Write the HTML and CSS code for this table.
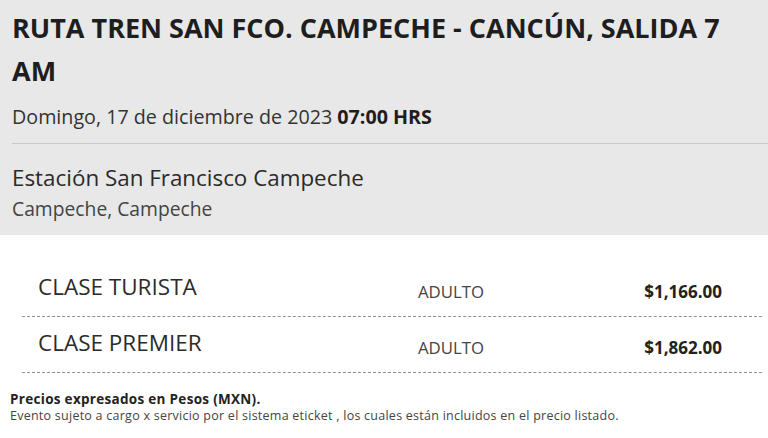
FILE: index.html
```html
<!DOCTYPE html>
<html lang="es">
<head>
<meta charset="utf-8">
<link rel="stylesheet" href="styles.css">
</head>
<body>
<header class="event">
  <h1 class="title">RUTA TREN SAN FCO. CAMPECHE - CANCÚN, SALIDA 7 AM</h1>
  <p class="date">Domingo, 17 de diciembre de 2023 <b>07:00 HRS</b></p>
  <div class="venue">
    <div class="venue-name">Estación San Francisco Campeche</div>
    <div class="venue-city">Campeche, Campeche</div>
  </div>
</header>
<section class="prices">
  <div class="row">
    <div class="cls">CLASE TURISTA</div>
    <div class="type">ADULTO</div>
    <div class="price">$1,166.00</div>
  </div>
  <div class="row">
    <div class="cls">CLASE PREMIER</div>
    <div class="type">ADULTO</div>
    <div class="price">$1,862.00</div>
  </div>
</section>
<footer class="notes">
  <p class="note-strong">Precios expresados en Pesos (MXN).</p>
  <p class="note">Evento sujeto a cargo x servicio por el sistema eticket , los cuales están incluidos en el precio listado.</p>
</footer>
</body>
</html>
```

FILE: styles.css
```css
html, body {
  margin: 0;
  padding: 0;
  background: #ffffff;
  font-family: "Open Sans", "Noto Sans", sans-serif;
  color: #333333;
}
.event {
  background: #e8e8e8;
  padding: 6px 0 10px 12px;
}
.title {
  margin: 0;
  font-size: 27px;
  font-weight: 700;
  line-height: 43px;
  color: #1e1e1e;
  padding-right: 20px;
}
.date {
  margin: 11px 0 0;
  padding: 0 0 13px;
  font-size: 19.7px;
  line-height: 27px;
  color: #333;
  border-bottom: 1px solid #c9c9c9;
}
.date b {
  color: #1e1e1e;
}
.venue {
  padding-top: 19px;
}
.venue-name {
  font-size: 22.4px;
  line-height: 30px;
  color: #2a2a2a;
}
.venue-city {
  font-size: 19.3px;
  line-height: 32px;
  color: #444;
}
.prices {
  margin: 26px 6px 0 22px;
}
.row {
  display: grid;
  grid-template-columns: 380px 1fr auto;
  align-items: center;
  height: 55px;
  padding: 0 40px 0 16px;
  border-bottom: 1px dashed #8a8f99;
}
.cls {
  font-size: 22.5px;
  line-height: 30px;
  color: #2b2b2b;
  padding-bottom: 3px;
}
.type {
  font-size: 16.8px;
  line-height: 24px;
  color: #444;
  padding-top: 6.5px;
}
.price {
  font-size: 17px;
  line-height: 24px;
  font-weight: 700;
  color: #222;
  padding-top: 6.5px;
}
.notes {
  padding: 18px 10px 0;
}
.notes p {
  margin: 0;
}
.note-strong {
  font-size: 13.5px;
  font-weight: 700;
  line-height: 17px;
  letter-spacing: 0.3px;
  color: #222;
}
.note {
  font-size: 12.5px;
  line-height: 16px;
  letter-spacing: 0.25px;
  color: #444;
}
```
